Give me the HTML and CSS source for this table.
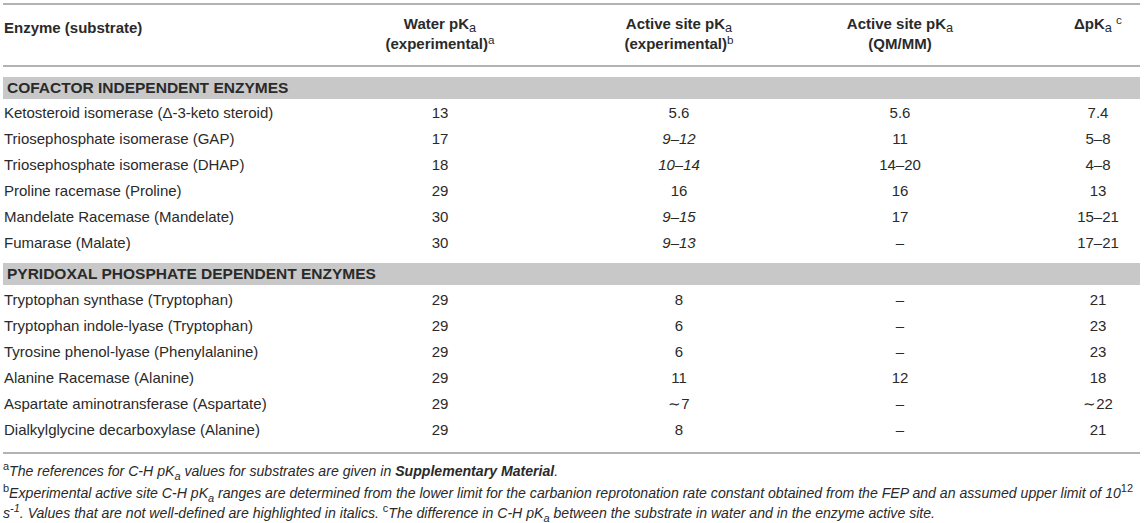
FILE: index.html
```html
<!DOCTYPE html>
<html>
<head>
<meta charset="utf-8">
<link rel="stylesheet" href="styles.css">
</head>
<body>
<div class="page">
  <div class="grid">
    <div class="th th-first">Enzyme (substrate)</div>
    <div class="th">Water pK<sub>a</sub><br>(experimental)<sup>a</sup></div>
    <div class="th">Active site pK<sub>a</sub><br>(experimental)<sup>b</sup></div>
    <div class="th">Active site pK<sub>a</sub><br>(QM/MM)</div>
    <div class="th last">ΔpK<sub>a</sub> <sup>c</sup></div>

    <div class="section first-section">COFACTOR INDEPENDENT ENZYMES</div>

    <div class="td name">Ketosteroid isomerase (Δ-3-keto steroid)</div><div class="td">13</div><div class="td">5.6</div><div class="td">5.6</div><div class="td last">7.4</div>
    <div class="td name">Triosephosphate isomerase (GAP)</div><div class="td">17</div><div class="td"><i>9–12</i></div><div class="td">11</div><div class="td last">5–8</div>
    <div class="td name">Triosephosphate isomerase (DHAP)</div><div class="td">18</div><div class="td"><i>10–14</i></div><div class="td">14–20</div><div class="td last">4–8</div>
    <div class="td name">Proline racemase (Proline)</div><div class="td">29</div><div class="td">16</div><div class="td">16</div><div class="td last">13</div>
    <div class="td name">Mandelate Racemase (Mandelate)</div><div class="td">30</div><div class="td"><i>9–15</i></div><div class="td">17</div><div class="td last">15–21</div>
    <div class="td name">Fumarase (Malate)</div><div class="td">30</div><div class="td"><i>9–13</i></div><div class="td">–</div><div class="td last">17–21</div>

    <div class="section second-section">PYRIDOXAL PHOSPHATE DEPENDENT ENZYMES</div>

    <div class="td name">Tryptophan synthase (Tryptophan)</div><div class="td">29</div><div class="td">8</div><div class="td">–</div><div class="td last">21</div>
    <div class="td name">Tryptophan indole-lyase (Tryptophan)</div><div class="td">29</div><div class="td">6</div><div class="td">–</div><div class="td last">23</div>
    <div class="td name">Tyrosine phenol-lyase (Phenylalanine)</div><div class="td">29</div><div class="td">6</div><div class="td">–</div><div class="td last">23</div>
    <div class="td name">Alanine Racemase (Alanine)</div><div class="td">29</div><div class="td">11</div><div class="td">12</div><div class="td last">18</div>
    <div class="td name">Aspartate aminotransferase (Aspartate)</div><div class="td">29</div><div class="td">∼7</div><div class="td">–</div><div class="td last">∼22</div>
    <div class="td name">Dialkylglycine decarboxylase (Alanine)</div><div class="td">29</div><div class="td">8</div><div class="td">–</div><div class="td last">21</div>
  </div>
  <div class="notes">
    <p class="note-a"><sup>a</sup>The references for C-H p<i>K</i><sub>a</sub> values for substrates are given in <b>Supplementary Material</b>.</p>
    <p><sup>b</sup>Experimental active site C-H pK<sub>a</sub> ranges are determined from the lower limit for the carbanion reprotonation rate constant obtained from the FEP and an assumed upper limit of 10<sup>12</sup> s<sup class="it">-1</sup>. Values that are not well-defined are highlighted in italics. <sup>c</sup>The difference in C-H pK<sub>a</sub> between the substrate in water and in the enzyme active site.</p>
  </div>
</div>
</body>
</html>
```
FILE: styles.css
```css
html, body {
  margin: 0;
  padding: 0;
  background: #ffffff;
}
body {
  font-family: "Liberation Sans", Arial, sans-serif;
  color: #2a2a2a;
}
.page {
  width: 1137px;
  padding: 3px 0 0 3px;
}
.grid {
  display: grid;
  grid-template-columns: 354px 166px 312px 130px 175px;
  border-top: 2px solid #b3b3b3;
  border-bottom: 2px solid #b3b3b3;
  font-size: 15px;
}
.th {
  font-weight: bold;
  text-align: center;
  line-height: 20px;
  padding-top: 9px;
  height: 51px;
  border-bottom: 2px solid #b3b3b3;
}
.th-first {
  text-align: left;
  padding-left: 1px;
  padding-top: 13px;
  height: 47px;
}
.th sub, .th sup {
  font-weight: normal;
}
sub, sup {
  font-size: 0.78em;
  line-height: 0;
}
.th sub {
  font-size: 0.85em;
  vertical-align: -0.2em;
}
.th sup {
  vertical-align: 0.4em;
}
.last {
  padding-left: 91px;
}
.section {
  grid-column: 1 / -1;
  background: #c8c8c8;
  font-weight: bold;
  font-size: 15.5px;
  line-height: 22px;
  height: 22px;
  padding-left: 4px;
  margin-bottom: 1px;
}
.first-section {
  margin-top: 10px;
}
.second-section {
  margin-top: 7px;
  margin-bottom: 2px;
}
.td {
  text-align: center;
  line-height: 26px;
  height: 26px;
  white-space: nowrap;
}
.td.name {
  text-align: left;
  padding-left: 1px;
}
.grid .td:nth-last-child(-n+5) {
  margin-bottom: 9px;
}
.notes {
  font-size: 14.1px;
  font-style: italic;
  line-height: 20.5px;
  padding-top: 7px;
}
.notes p {
  margin: 0;
}
.notes .note-a {
  margin-bottom: 1px;
}
.notes sup {
  font-style: normal;
}
.notes sup.it {
  font-style: italic;
}
```
